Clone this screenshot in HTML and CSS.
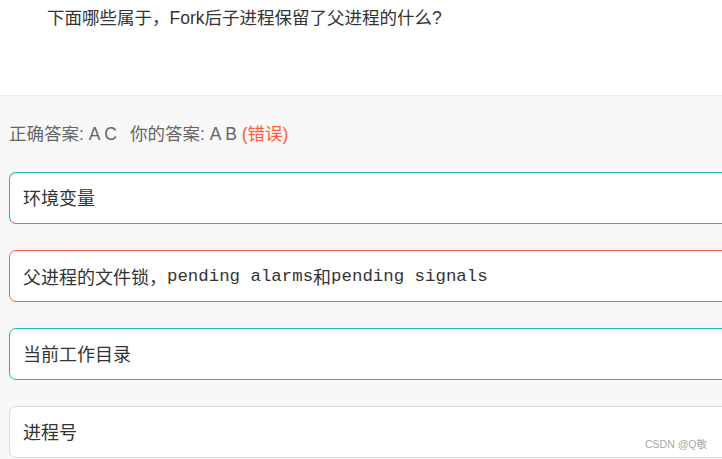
FILE: index.html
```html
<!DOCTYPE html>
<html lang="zh-CN">
<head>
<meta charset="utf-8">
<title>Fork</title>
<link rel="stylesheet" href="styles.css">
</head>
<body>
<div class="page">
  <div class="question">
    <p class="q-text">下面哪些属于，Fork后子进程保留了父进程的什么?</p>
  </div>
  <div class="answer-area">
    <p class="result">正确答案: A C<span class="sep"></span>你的答案: A B <span class="wrong">(错误)</span></p>
    <div class="options">
      <div class="option opt-correct-picked">环境变量</div>
      <div class="option opt-wrong">父进程的文件锁，<span class="code">pending alarms</span>和<span class="code">pending signals</span></div>
      <div class="option opt-correct">当前工作目录</div>
      <div class="option opt-plain">进程号</div>
    </div>
  </div>
  <div class="watermark">CSDN @Q敬</div>
</div>
</body>
</html>
```

FILE: styles.css
```css
* { box-sizing: border-box; }
html, body {
  margin: 0;
  padding: 0;
  width: 722px;
  height: 459px;
  overflow: hidden;
  background: #f8f8f8;
  font-family: "Liberation Sans", "Noto Sans CJK SC", sans-serif;
}
.page {
  position: relative;
  width: 722px;
  height: 459px;
  overflow: hidden;
}
.question {
  background: #fff;
  height: 96px;
  border-bottom: 1px solid #ececec;
  padding: 7px 0 0 47px;
}
.q-text {
  margin: 0;
  font-size: 17.5px;
  line-height: 22px;
  color: #333;
}
.answer-area {
  padding: 24px 0 0 9px;
}
.result {
  margin: 0;
  font-size: 17.5px;
  line-height: 28px;
  color: #666;
}
.sep { display: inline-block; width: 13px; }
.wrong { color: #ff5c3c; }
.options {
  display: flex;
  flex-direction: column;
  gap: 26px;
  margin-top: 24px;
}
.option {
  width: 780px;
  height: 52px;
  background: #fff;
  border: 1px solid #ddd;
  border-radius: 7px;
  padding: 0 0 2px 13px;
  display: flex;
  align-items: center;
  font-size: 18px;
  color: #333;
  white-space: nowrap;
}
.opt-correct-picked {
  border-color: #1abc9c #1abc9c #ff5c3c #1abc9c;
}
.opt-wrong { border-color: #ff5c3c; padding-bottom: 0; }
.opt-correct { border-color: #1abc9c; }
.opt-plain { border-color: #dcdcdc; }
.code {
  font-family: "Liberation Mono", monospace;
  font-size: 17.4px;
}
.watermark {
  position: absolute;
  left: 645px;
  top: 436px;
  font-size: 10.5px;
  color: #a8a8a8;
}
```
